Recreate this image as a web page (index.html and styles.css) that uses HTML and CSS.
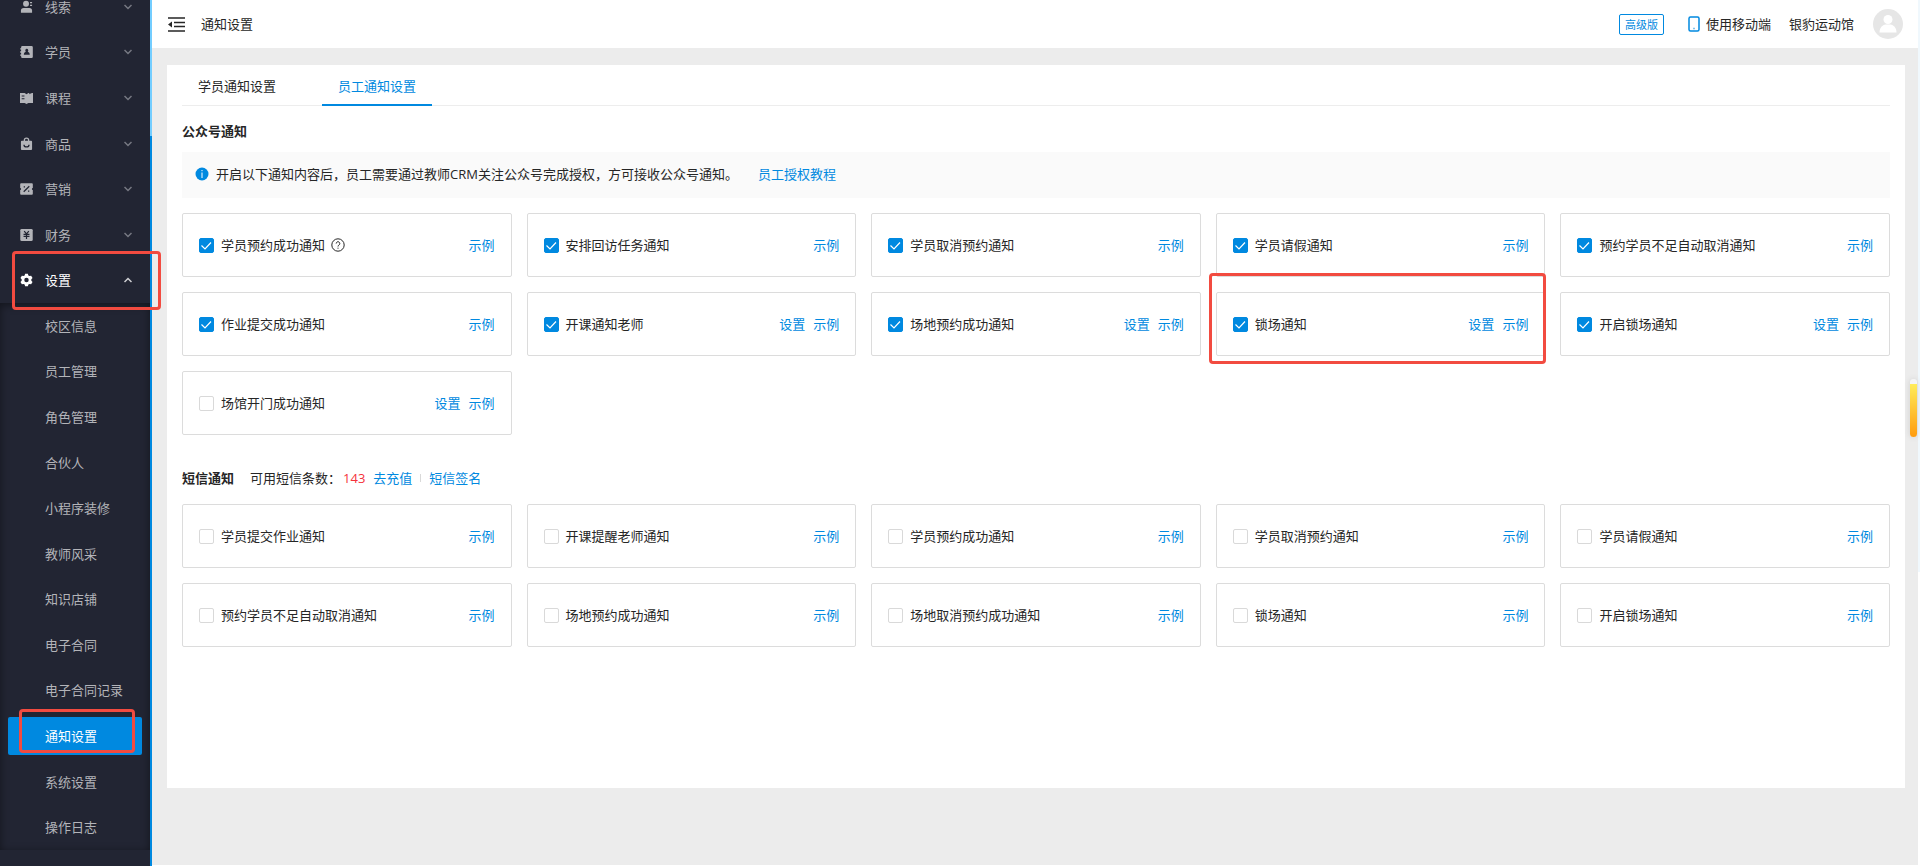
FILE: index.html
```html
<!DOCTYPE html>
<html lang="zh-CN">

<head>
    <meta charset="UTF-8">
    <title>通知设置</title>
    <link rel="stylesheet" href="styles.css">
</head>

<body>

    <aside class="sidebar">
        <nav class="menu">
            <button class="menu-item" type="button">
                <svg class="menu-icon" viewBox="0 0 14 14"><circle cx="6.5" cy="3.5" r="3.2"/><path d="M1 13.2V11a3 3 0 0 1 3-3h6a3 3 0 0 1 3 3v2.200z"/><path d="M10.800 1.500h2.200v1.400h-2.200zM10.800 4.500h2.200v1.400h-2.200z"/></svg>
                <span>线索</span>
                <svg class="arrow" viewBox="0 0 8 6"><path d="M.5 1 4 4.500 7.500 1"/></svg>
            </button>
            <button class="menu-item" type="button">
                <svg class="menu-icon" viewBox="0 0 14 14"><path fill-rule="evenodd" d="M2.500.5H12.500a1.300 1.300 0 0 1 1.300 1.300v10.400a1.300 1.300 0 0 1-1.300 1.300H2.500A1.300 1.300 0 0 1 1.200 12.200v-1.200H.2V9.600h1V7.700H.2V6.300h1V4.400H.2V3h1V1.800A1.300 1.300 0 0 1 2.500.5zM7.300 3.600a1.700 1.700 0 0 0-1 3C4.900 7 4.100 8 4.100 9.900h6.400c0-1.900-.8-2.900-2.200-3.300a1.700 1.700 0 0 0-1-3z"/></svg>
                <span>学员</span>
                <svg class="arrow" viewBox="0 0 8 6"><path d="M.5 1 4 4.500 7.500 1"/></svg>
            </button>
            <button class="menu-item" type="button">
                <svg class="menu-icon" viewBox="0 0 14 14"><path fill-rule="evenodd" d="M0 1.500h5L7 3l2-1.500h1V3l1.500-.8L13 1.500h1v11H9l-2 1-2-1H0zM1.800 4.200v1.200h3V4.200zM1.800 7.200v1.200h3V7.200z"/></svg>
                <span>课程</span>
                <svg class="arrow" viewBox="0 0 8 6"><path d="M.5 1 4 4.500 7.500 1"/></svg>
            </button>
            <button class="menu-item" type="button">
                <svg class="menu-icon" viewBox="0 0 14 14"><path fill-rule="evenodd" d="M4 3.500V3a3 3 0 0 1 6 0v.5h2a1 1 0 0 1 1 1v8a1 1 0 0 1-1 1H2a1 1 0 0 1-1-1v-8a1 1 0 0 1 1-1zM5.400 3.500h3.200V3a1.600 1.600 0 0 0-3.200 0zM3.600 7.700a3.400 3.200 0 0 0 6.800 0H9a2 1.800 0 0 1-4 0z"/></svg>
                <span>商品</span>
                <svg class="arrow" viewBox="0 0 8 6"><path d="M.5 1 4 4.500 7.500 1"/></svg>
            </button>
            <button class="menu-item" type="button">
                <svg class="menu-icon" viewBox="0 0 14 14"><path d="M1.200.8h11.600a1 1 0 0 1 1 1V6a1 1 0 0 0 0 2v4.200a1 1 0 0 1-1 1H1.200a1 1 0 0 1-1-1V8a1 1 0 0 0 0-2V1.800a1 1 0 0 1 1-1z"/><path class="cut" d="M4 10 10 4M4 4.700h1.400M8.600 9.300H10"/></svg>
                <span>营销</span>
                <svg class="arrow" viewBox="0 0 8 6"><path d="M.5 1 4 4.500 7.500 1"/></svg>
            </button>
            <button class="menu-item" type="button">
                <svg class="menu-icon" viewBox="0 0 14 14"><rect x=".3" y=".5" width="13.400" height="13" rx="1.500"/><path class="cut" d="M4.500 2.800 7 5.800 9.500 2.800M3.800 6.300h6.400M3.800 8.500h6.400M7 6v5.200"/></svg>
                <span>财务</span>
                <svg class="arrow" viewBox="0 0 8 6"><path d="M.5 1 4 4.500 7.500 1"/></svg>
            </button>
            <button class="menu-item open marked" type="button">
                <svg class="menu-icon" viewBox="0 0 14 14"><path fill-rule="evenodd" d="M5.500.3h3l.5 1.800 1.200.7 1.800-.5 1.500 2.600L12.200 6.300v1.400l1.300 1.400-1.500 2.600-1.800-.5-1.200.7-.5 1.800h-3L5 11.900l-1.200-.7-1.800.5L.5 9.100l1.300-1.400V6.300L.5 4.900 2 2.300l1.800.5L5 2.100zM7 4.600a2.400 2.400 0 1 0 0 4.800 2.400 2.400 0 0 0 0-4.800z"/></svg>
                <span>设置</span>
                <svg class="arrow" viewBox="0 0 8 6"><path d="M.5 5 4 1.500 7.500 5"/></svg>
            </button>
            <ul class="submenu">
                <li><a href="#">校区信息</a></li>
                <li><a href="#">员工管理</a></li>
                <li><a href="#">角色管理</a></li>
                <li><a href="#">合伙人</a></li>
                <li><a href="#">小程序装修</a></li>
                <li><a href="#">教师风采</a></li>
                <li><a href="#">知识店铺</a></li>
                <li><a href="#">电子合同</a></li>
                <li><a href="#">电子合同记录</a></li>
                <li><a class="active marked" href="#">通知设置</a></li>
                <li><a href="#">系统设置</a></li>
                <li><a href="#">操作日志</a></li>
            </ul>
        </nav>
    </aside>

    <div class="page">
        <header class="header">
            <button class="fold" type="button" aria-label="收起菜单">
                <svg viewBox="0 0 17 15"><path d="M0 1h17M6 5.500h11M6 9.500h11M0 14h17"/><path class="solid" d="M0 7.500 4 4.500v6z"/></svg>
            </button>
            <span class="page-name">通知设置</span>
            <span class="version">高级版</span>
            <a class="mobile" href="#">
                <svg viewBox="0 0 12 16"><rect x="1" y="1" width="10" height="14" rx="1.500"/><path d="M5.500 12.500h1"/></svg>
                使用移动端
            </a>
            <span class="venue">银豹运动馆</span>
            <svg class="avatar" viewBox="0 0 30 30"><circle cx="15" cy="15" r="15" fill="#e6e6e6"/><circle cx="15" cy="10.500" r="4.500" fill="#fff"/><path d="M6.500 23.500c0-5 3-7.500 6-8h5c3 .5 6 3 6 8z" fill="#fff"/></svg>
        </header>

        <main class="content">
            <section class="panel">
                <div class="tabs">
                    <button class="tab" type="button">学员通知设置</button>
                    <button class="tab current" type="button">员工通知设置</button>
                </div>

                <h2 class="title">公众号通知</h2>
                <div class="notice">
                    <svg viewBox="0 0 14 14"><circle cx="7" cy="7" r="6.500" fill="#0089e0"/><path d="M7 3v1.200M7 5.500V11" stroke="#fff"/></svg>
                    <span>开启以下通知内容后，员工需要通过教师CRM关注公众号完成授权，方可接收公众号通知。</span>
                    <a href="#">员工授权教程</a>
                </div>

                <div class="cards">
                    <div class="card">
                        <label><input type="checkbox" checked>学员预约成功通知</label>
                        <svg class="help" viewBox="0 0 14 14"><circle cx="7" cy="7" r="6.200"/><path d="M5.200 5.500a1.800 1.800 0 1 1 2.700 1.600c-.7.4-.9.700-.9 1.400M7 9.700v1"/></svg>
                        <div class="links"><a href="#">示例</a></div>
                    </div>
                    <div class="card">
                        <label><input type="checkbox" checked>安排回访任务通知</label>
                        <div class="links"><a href="#">示例</a></div>
                    </div>
                    <div class="card">
                        <label><input type="checkbox" checked>学员取消预约通知</label>
                        <div class="links"><a href="#">示例</a></div>
                    </div>
                    <div class="card">
                        <label><input type="checkbox" checked>学员请假通知</label>
                        <div class="links"><a href="#">示例</a></div>
                    </div>
                    <div class="card">
                        <label><input type="checkbox" checked>预约学员不足自动取消通知</label>
                        <div class="links"><a href="#">示例</a></div>
                    </div>
                    <div class="card">
                        <label><input type="checkbox" checked>作业提交成功通知</label>
                        <div class="links"><a href="#">示例</a></div>
                    </div>
                    <div class="card">
                        <label><input type="checkbox" checked>开课通知老师</label>
                        <div class="links"><a href="#">设置</a><a href="#">示例</a></div>
                    </div>
                    <div class="card">
                        <label><input type="checkbox" checked>场地预约成功通知</label>
                        <div class="links"><a href="#">设置</a><a href="#">示例</a></div>
                    </div>
                    <div class="card marked">
                        <label><input type="checkbox" checked>锁场通知</label>
                        <div class="links"><a href="#">设置</a><a href="#">示例</a></div>
                    </div>
                    <div class="card">
                        <label><input type="checkbox" checked>开启锁场通知</label>
                        <div class="links"><a href="#">设置</a><a href="#">示例</a></div>
                    </div>
                    <div class="card">
                        <label><input type="checkbox">场馆开门成功通知</label>
                        <div class="links"><a href="#">设置</a><a href="#">示例</a></div>
                    </div>
                </div>

                <div class="sms-bar">
                    <h2 class="title">短信通知</h2>
                    <span>可用短信条数：</span>
                    <span class="count">143</span>
                    <a href="#">去充值</a>
                    <i class="divider"></i>
                    <a href="#">短信签名</a>
                </div>

                <div class="cards">
                    <div class="card">
                        <label><input type="checkbox">学员提交作业通知</label>
                        <div class="links"><a href="#">示例</a></div>
                    </div>
                    <div class="card">
                        <label><input type="checkbox">开课提醒老师通知</label>
                        <div class="links"><a href="#">示例</a></div>
                    </div>
                    <div class="card">
                        <label><input type="checkbox">学员预约成功通知</label>
                        <div class="links"><a href="#">示例</a></div>
                    </div>
                    <div class="card">
                        <label><input type="checkbox">学员取消预约通知</label>
                        <div class="links"><a href="#">示例</a></div>
                    </div>
                    <div class="card">
                        <label><input type="checkbox">学员请假通知</label>
                        <div class="links"><a href="#">示例</a></div>
                    </div>
                    <div class="card">
                        <label><input type="checkbox">预约学员不足自动取消通知</label>
                        <div class="links"><a href="#">示例</a></div>
                    </div>
                    <div class="card">
                        <label><input type="checkbox">场地预约成功通知</label>
                        <div class="links"><a href="#">示例</a></div>
                    </div>
                    <div class="card">
                        <label><input type="checkbox">场地取消预约成功通知</label>
                        <div class="links"><a href="#">示例</a></div>
                    </div>
                    <div class="card">
                        <label><input type="checkbox">锁场通知</label>
                        <div class="links"><a href="#">示例</a></div>
                    </div>
                    <div class="card">
                        <label><input type="checkbox">开启锁场通知</label>
                        <div class="links"><a href="#">示例</a></div>
                    </div>
                </div>
            </section>
        </main>
    </div>

    <div class="page-scroll"></div>
    <div class="float-bar"></div>

</body>

</html>
```
FILE: styles.css
```css
* {
    box-sizing: border-box;
}

body {
    margin: 0;
    display: flex;
    height: 100vh;
    overflow: hidden;
    font-family: "Open Sans", "Noto Sans CJK SC", sans-serif;
    font-size: 13px;
    line-height: 20px;
    color: #262626;
    background: #fff;
}

button {
    padding: 0;
    border: none;
    background: none;
    font: inherit;
    color: inherit;
    cursor: pointer;
}

a {
    color: #0089e0;
    text-decoration: none;
}

svg {
    display: block;
    flex: none;
}

/* sidebar */
.sidebar {
    position: relative;
    z-index: 2;
    flex: none;
    display: flex;
    width: 152px;
    padding-bottom: 16px;
    background: linear-gradient(#73cdff 136px, #0089e0 136px) right / 2px 100% no-repeat #222533;
    color: #b3b4b9;
}

/* the list is scrolled down a little */
.menu {
    flex: 1;
    display: flex;
    flex-direction: column;
    margin-top: -16px;
    margin-right: 2px;
}

.menu-item {
    flex: 1;
    display: flex;
    align-items: center;
    gap: 12px;
    padding: 0 18px 0 20px;
}

.menu-item.open {
    color: #fff;
}

.menu-icon {
    width: 13px;
    height: 14px;
    fill: currentColor;
}

.menu-icon .cut {
    fill: none;
    stroke: #222533;
    stroke-width: 1.3;
}

.arrow {
    width: 8px;
    height: 6px;
    margin-left: auto;
    fill: none;
    stroke: #777983;
    stroke-width: 1.5;
}

.open .arrow {
    stroke: #d0d0d4;
}

.submenu {
    flex: 12;
    display: flex;
    flex-direction: column;
    margin: 0;
    padding: 0;
    list-style: none;
    box-shadow: inset 0 2px 8px rgba(0, 0, 0, 0.45);
}

.submenu li {
    flex: 1;
    display: flex;
    padding: 4px 8px;
}

.submenu a {
    flex: 1;
    display: flex;
    align-items: center;
    padding-left: 37px;
    border-radius: 2px;
    color: #b3b4b9;
}

.submenu .active {
    background: #0089e0;
    color: #fff;
}

/* red highlight frames */
.marked {
    position: relative;
}

.marked::after {
    content: "";
    position: absolute;
    border: 3px solid #f24b40;
    border-radius: 4px;
    pointer-events: none;
}

.menu-item.marked::after {
    inset: -6px -11px -7px 12px;
}

.active.marked::after {
    inset: -8px 7px 2px 11px;
}

.card.marked::after {
    inset: -20px -2px -9px -8px;
}

/* header */
.page {
    flex: 1;
    display: flex;
    flex-direction: column;
    min-width: 0;
    padding: 0 2px 1px 0;
}

.header {
    flex: none;
    display: flex;
    align-items: center;
    height: 48px;
    padding: 0 15px 0 16px;
}

.fold svg {
    width: 17px;
    height: 15px;
    fill: none;
    stroke: #262626;
    stroke-width: 1.5;
}

.fold .solid {
    fill: #262626;
    stroke: none;
}

.page-name {
    margin-left: 16px;
}

.version {
    margin-left: auto;
    padding: 0 5px;
    border: 1px solid #0089e0;
    border-radius: 2px;
    font-size: 11px;
    line-height: 19px;
    color: #0089e0;
}

.mobile {
    display: flex;
    align-items: center;
    gap: 6px;
    margin-left: 24px;
    color: #262626;
}

.mobile svg {
    width: 12px;
    height: 16px;
    fill: none;
    stroke: #0089e0;
    stroke-width: 1.5;
}

.venue {
    margin-left: 18px;
}

.avatar {
    width: 30px;
    height: 30px;
    margin-left: 19px;
}

/* content */
.content {
    flex: 1;
    display: flex;
    padding: 17px 13px 77px 15px;
    background: #ececec;
}

.panel {
    flex: 1;
    min-width: 0;
    padding: 0 15px 15px;
    background: #fff;
}

.tabs {
    display: flex;
    gap: 30px;
    height: 41px;
    box-shadow: inset 0 -1px #ededed;
}

.tab {
    padding: 0 16px;
}

.tab.current {
    border-bottom: 2px solid #0089e0;
    padding-top: 2px;
    color: #0089e0;
}

.title {
    margin: 0;
    font-size: 13px;
    font-weight: 700;
}

.tabs + .title {
    margin: 15px 0 11px;
}

.notice {
    display: flex;
    align-items: center;
    padding: 12px 13px 14px;
    margin-bottom: 15px;
    background: #fafafa;
}

.notice svg {
    width: 14px;
    height: 14px;
    margin-right: 7px;
}

.notice a {
    margin-left: 20px;
}

.cards {
    display: grid;
    grid-template-columns: repeat(5, 1fr);
    gap: 15px;
}

.card {
    display: flex;
    align-items: center;
    min-height: 64px;
    padding: 0 16px;
    border: 1px solid #dcdcdc;
    border-radius: 2px;
}

.card label {
    display: flex;
    align-items: center;
    gap: 7px;
    cursor: pointer;
}

.card input {
    appearance: none;
    width: 15px;
    height: 15px;
    margin: 0;
    border: 1px solid #d9d9d9;
    border-radius: 2px;
    background: #fff;
}

.card input:checked {
    border-color: #0089e0;
    background: #0089e0 url("data:image/svg+xml,%3Csvg xmlns='http://www.w3.org/2000/svg' viewBox='0 0 13 13'%3E%3Cpath d='M1.500 6.500 5 10 11 3.500' fill='none' stroke='white' stroke-width='1.200'/%3E%3C/svg%3E");
}

.help {
    width: 14px;
    height: 14px;
    margin-left: 6px;
    fill: none;
    stroke: #262626;
}

.links {
    display: flex;
    gap: 8px;
    margin-left: auto;
}

.sms-bar {
    display: flex;
    align-items: center;
    gap: 8px;
    margin: 33px 0 16px;
}

.sms-bar .title {
    margin-right: 8px;
}

.count {
    margin-left: -6px;
    color: #f5323c;
}

.divider {
    width: 1px;
    height: 8px;
    background: #d9d9d9;
}

/* right edge */
.page-scroll {
    position: fixed;
    top: 0;
    right: 0;
    width: 2px;
    height: 66%;
    background: #f0f8fd;
    box-shadow: 0 100vh #ececec;
}

.float-bar {
    position: fixed;
    top: 379px;
    right: 3px;
    width: 7px;
    height: 58px;
    border-radius: 4px;
    background: linear-gradient(#f4f4f4 5px, #ffec5a 5px, #ff9c0f);
    box-shadow: 0 0 6px rgba(0, 0, 0, 0.12);
}
```
